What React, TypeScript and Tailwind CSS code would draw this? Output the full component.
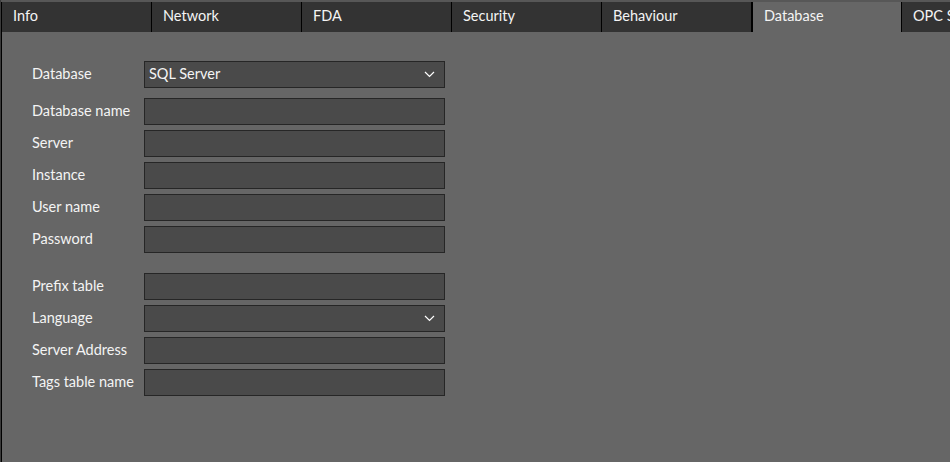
import React from "react";

const tabs = ["Info", "Network", "FDA", "Security", "Behaviour", "Database", "OPC Server"];

function Chevron() {
  return (
    <svg width="11" height="7" viewBox="0 0 11 7" className="mr-[9px]">
      <polyline points="1,1 5.5,5.5 10,1" fill="none" stroke="#ffffff" strokeWidth="1.2" />
    </svg>
  );
}

function Row({ label, select, value, className = "" }: { label: string; select?: boolean; value?: string; className?: string }) {
  return (
    <div className={"flex items-center h-[27px] " + className}>
      <div className="w-[112px] shrink-0 text-[14.5px] text-[#f4f4f4] -mt-[2px] whitespace-nowrap">{label}</div>
      <div className="w-[301px] h-[27px] bg-[#4a4a4a] border border-[#262626] flex items-center justify-between">
        <span className="pl-[4px] text-[14.5px] text-[#f4f4f4] -mt-[2px]">{value ?? ""}</span>
        {select ? <Chevron /> : null}
      </div>
    </div>
  );
}

export default function App() {
  return (
    <div
      className="w-[950px] h-[462px] bg-[#666666] flex flex-col overflow-hidden border-l border-[#3a3a3a]"
      style={{ fontFamily: '"Segoe UI", Lato, "Open Sans", sans-serif' }}
    >
      <div className="h-[2px] bg-[#575757] shrink-0" />
      <div className="flex-1 flex flex-col border-l border-black">
        <div className="h-[30px] flex bg-[#333333] shrink-0">
          {tabs.map((t, i) => (
            <div
              key={t}
              className={
                "h-full shrink-0 flex items-center pl-[11px] text-[14.5px] text-[#f4f4f4] whitespace-nowrap overflow-hidden " +
                (i === 0 ? "w-[149px] " : "w-[150px] border-l border-black ") +
                (t === "Database" ? "bg-[#666666] border-l-2" : "")
              }
            >
              <span className="-mt-[3px]">{t}</span>
            </div>
          ))}
        </div>
        <div className="pl-[30px] pt-[29px] flex flex-col gap-[5px]">
          <Row label="Database" select value="SQL Server" className="mb-[5px]" />
          <Row label="Database name" />
          <Row label="Server" />
          <Row label="Instance" />
          <Row label="User name" />
          <Row label="Password" className="mb-[15px]" />
          <Row label="Prefix table" />
          <Row label="Language" select />
          <Row label="Server Address" />
          <Row label="Tags table name" />
        </div>
      </div>
    </div>
  );
}
